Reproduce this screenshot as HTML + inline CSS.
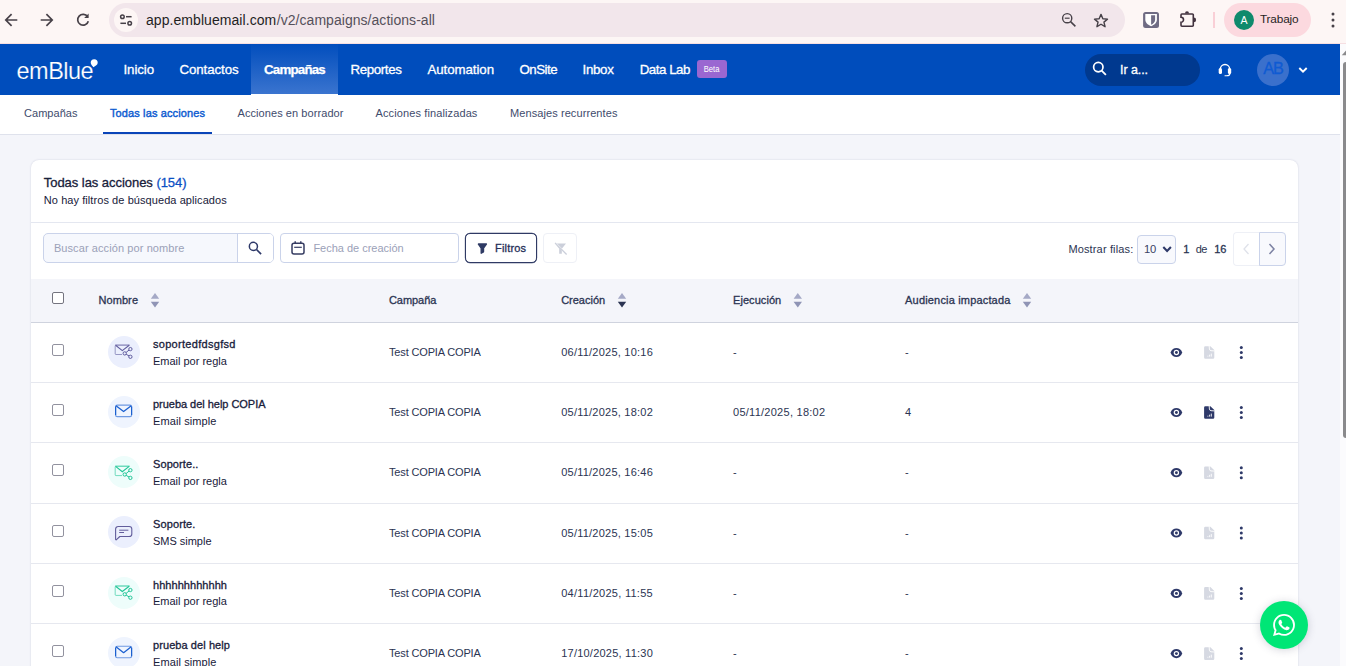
<!DOCTYPE html>
<html lang="es">
<head>
<meta charset="utf-8">
<title>emBlue - Todas las acciones</title>
<style>
*{box-sizing:border-box;margin:0;padding:0}
html,body{width:1346px;height:666px;overflow:hidden;background:#f4f5fa;font-family:"Liberation Sans",sans-serif;color:#18203a}
.tx{position:absolute;white-space:nowrap;display:block}
.a{position:absolute}
svg{position:absolute;overflow:visible}
#chrome{position:absolute;left:0;top:0;width:1346px;height:44px;background:#fdf6f5;border-bottom:1px solid #f6dfe2}
#omni{position:absolute;left:109px;top:3px;width:1016px;height:34px;border-radius:17px;background:#f2e6eb}
#site{position:absolute;left:114px;top:8px;width:24px;height:24px;border-radius:12px;background:#fdf6f5}
#profile{position:absolute;left:1224px;top:3px;width:87px;height:34px;border-radius:17px;background:#fcd9df}
#av{position:absolute;left:1234px;top:10px;width:20px;height:20px;border-radius:10px;background:#0f8a6c}
#sep{position:absolute;left:1213px;top:12px;width:2px;height:16px;background:#f9cfd6}
#nav{position:absolute;left:0;top:44px;width:1340px;height:51px;background:#004dbc}
#navact{position:absolute;left:251px;top:44px;width:87px;height:51px;background:linear-gradient(#024ebd,#3a74cf);border-bottom:1px solid #fdfeff}
#beta{position:absolute;left:697px;top:60px;width:30px;height:18px;border-radius:3px;background:#9a67d1}
#goto{position:absolute;left:1085px;top:54px;width:115px;height:32px;border-radius:16px;background:#00398f}
#ab{position:absolute;left:1257px;top:54px;width:32px;height:32px;border-radius:16px;background:#3a70cc}
#subnav{position:absolute;left:0;top:95px;width:1340px;height:40px;background:#fff;border-bottom:1px solid #dfe2ec}
#subul{position:absolute;left:103px;top:132px;width:109px;height:2px;background:#0a44b8}
#track{position:absolute;left:1340px;top:44px;width:6px;height:622px;background:#fbfbfd}
#thumb{position:absolute;left:1343px;top:62px;width:8px;height:376px;background:#8a8a8c;border-radius:3px}
#card{position:absolute;left:31px;top:160px;width:1267px;height:540px;background:#fff;border-radius:8px;box-shadow:0 0 2px rgba(50,60,110,.20)}
#hline{position:absolute;left:31px;top:222px;width:1267px;height:1px;background:#e4e7f0}
#sbox{position:absolute;left:43px;top:233px;width:231px;height:30px;border:1px solid #cad3ea;border-radius:5px;background:#f6f8fd}
#sbtn{position:absolute;left:237px;top:234px;width:36px;height:28px;border-left:1px solid #cad3ea;background:#fff;border-radius:0 4px 4px 0}
#dbox{position:absolute;left:280px;top:233px;width:179px;height:30px;border:1px solid #cad3ea;border-radius:4px;background:#fff}
#fbtn{position:absolute;left:465px;top:233px;width:72px;height:30px;border:1px solid #2f3a64;border-radius:5px;box-shadow:0 0 0 .15px #2f3a64;background:#fff}
#cbtn{position:absolute;left:543px;top:233px;width:34px;height:30px;border:1px solid #eef0f6;border-radius:4px;background:#fff}
#sel{position:absolute;left:1137px;top:235px;width:39px;height:29px;border:1px solid #cad3ea;border-radius:4px;background:#f8f9fd}
#prev{position:absolute;left:1233px;top:232px;width:27px;height:34px;border:1px solid #eef0f6;border-right:none;border-radius:4px 0 0 4px;background:#fff}
#next{position:absolute;left:1259px;top:232px;width:27px;height:34px;border:1px solid #cad3ea;border-radius:0 4px 4px 0;background:#f8f9fd}
#thead{position:absolute;left:31px;top:279px;width:1267px;height:44px;background:#f4f5fa;border-bottom:1px solid #cfd3de}
.rl{position:absolute;left:31px;width:1267px;height:1px;background:#e6e8ef}
.cb{position:absolute;left:52px;width:12px;height:12px;border:1px solid #92929f;border-radius:2px;background:#fff}
.ic{position:absolute;left:108px;width:32px;height:32px;border-radius:16px}
#wa{position:absolute;left:1260px;top:601px;width:48px;height:48px;border-radius:24px;background:#00e676;box-shadow:0 1px 8px rgba(60,60,90,.22)}
</style>
</head>
<body>
<div id="chrome"></div>
<div id="omni"></div><div id="site"></div>
<div id="sep"></div><div id="profile"></div><div id="av"></div>

<svg style="left:0;top:0" width="1346" height="44" viewBox="0 0 1346 44" fill="none" stroke="#474148" stroke-width="1.7" stroke-linecap="butt" stroke-linejoin="miter">
<path d="M17.3 20H6.2M11.6 14.2L5.8 20l5.8 5.8"/>
<path d="M40.7 20h11.1M46.4 14.2l5.8 5.8-5.8 5.8"/>
<path d="M87.6 16.8A5.4 5.4 0 1 0 88.3 21.2"/>
<path d="M88.6 13.6v4.4h-4.4z" fill="#474148" stroke="none"/>
<circle cx="122.4" cy="16.7" r="1.8" stroke-width="1.5"/><path d="M126 16.7h5.6" stroke-width="1.5"/>
<circle cx="129.7" cy="23.3" r="1.8" stroke-width="1.5"/><path d="M120.4 23.3h5.6" stroke-width="1.5"/>
<circle cx="1067.2" cy="18.2" r="4.6" stroke-width="1.4"/><path d="M1070.6 21.6l4.8 4.8" stroke-width="1.5"/><path d="M1064.8 18.2h4.8" stroke-width="1.2"/>
<path d="M1101 14.4l1.85 4.3 4.65.4-3.55 3.05 1.1 4.55-4.05-2.45-4.05 2.45 1.1-4.55-3.55-3.05 4.65-.4z" stroke-width="1.4" stroke-linejoin="round"/>
<rect x="1143.100" y="12" width="15.900" height="16" rx="2.500" fill="#6f6b83" stroke="none"/>
<path d="M1145.300 14h11.600v5.800c0 3-2.800 5.200-5.800 6.500-3-1.300-5.800-3.500-5.800-6.500z" fill="#fff" stroke="none"/>
<path d="M1151.100 15.300v9.500c2-1 4-2.600 4-5v-4.500z" fill="#6f6b83" stroke="none"/>
<path d="M1181.900 14h10.500a.9.900 0 0 1 .9.900v10.400a.9.900 0 0 1-.9.900h-10.500a.9.900 0 0 1-.9-.9v-3.100a2.500 2.500 0 0 0 0-5v-2.300a.9.900 0 0 1 .9-.9z" stroke-width="1.600" stroke="#42323f"/>
<path d="M1185 13.500a2 2.300 0 0 1 4 0z" fill="#42323f" stroke="none"/><path d="M1193.700 17.500a2.400 2.400 0 0 1 0 4.800z" fill="#42323f" stroke="none"/>
<circle cx="1333" cy="14" r="1.5" fill="#474148" stroke="none"/><circle cx="1333" cy="20" r="1.5" fill="#474148" stroke="none"/><circle cx="1333" cy="26" r="1.5" fill="#474148" stroke="none"/>
</svg>
<div id="nav"></div><div id="navact"></div><div id="beta"></div><div id="goto"></div><div id="ab"></div>
<div id="subnav"></div><div id="subul"></div>
<div id="track"></div><div id="thumb"></div>
<svg style="left:0;top:44px" width="1340" height="51" viewBox="0 44 1340 51" fill="none" stroke="#fff">
<path d="M94.200 59.300a3.500 3.500 0 0 1 3.500 3.500c0 2-2.200 3.500-4.400 4.400-.6-1.200-2.600-2.700-2.600-4.400a3.500 3.500 0 0 1 3.500-3.500z" fill="#fff" stroke="none"/>
<circle cx="1098.300" cy="67.100" r="4.700" stroke-width="1.700"/><path d="M1101.600 70.600l4.300 4.300" stroke-width="1.800"/>
<path d="M1220.300 71v-1.600a4.700 4.900 0 0 1 9.400 0v1.600" stroke-width="1.400"/>
<rect x="1218.700" y="68" width="3.300" height="6" rx="1.500" fill="#fff" stroke="none"/><rect x="1227.900" y="68" width="3.300" height="6" rx="1.500" fill="#fff" stroke="none"/>
<path d="M1229.900 73.500c0 1.700-1.500 2.300-3.200 2.300h-1.700" stroke-width="1.100" stroke-linecap="round"/>
<path d="M1299.300 68l3.700 3.700 3.700-3.700" stroke-width="1.900"/>
<path d="M1341.800 55.300l4.200-4.900v4.900z" fill="#8a8a8c" stroke="none"/>
</svg>
<div id="card"></div><div id="hline"></div>
<div id="sbox"></div><div id="sbtn"></div><div id="dbox"></div><div id="fbtn"></div><div id="cbtn"></div>
<div id="sel"></div><div id="prev"></div><div id="next"></div>
<div id="thead"></div>
<svg style="left:0;top:220px" width="1340" height="100" viewBox="0 220 1340 100" fill="none" stroke="#2e3969">
<circle cx="253.400" cy="246.400" r="4.050" stroke-width="1.500"/><path d="M256.500 249.500l4.600 4.600" stroke-width="1.700"/>
<rect x="292" y="243.300" width="12" height="10.800" rx="2" stroke-width="1.500" stroke="#363c62"/><path d="M294.200 247.300h7.600" stroke-width="1.200" stroke="#363c62"/><path d="M295.200 241.300v2.400M300.800 241.300v2.400" stroke-width="1.400" stroke="#363c62"/>
<path d="M478.400 244h8l-2.900 4.200v3.600l-2.300 1.400v-5z" fill="#2f3a64" stroke="#2f3a64" stroke-width="1.400" stroke-linejoin="round"/>
<g stroke="none" fill="#cbcfda"><path d="M555 243.500h11l-4.200 5.300v5h-2.600v-5z"/><path d="M554 242.600l1-1 12.500 12.500-1 1z" fill="#fff"/><path d="M554.600 243.300l.9-.9 11.600 11.600-.9.900z"/></g>
<path d="M1163.300 247.100l3.800 3.800 3.800-3.800" stroke-width="2.100"/>
<path d="M1248.500 244l-4.500 5 4.500 5" stroke="#dfe2ea" stroke-width="1.300"/>
<path d="M1269.500 244l4.500 5-4.500 5" stroke="#7c82a3" stroke-width="1.500"/>
<g stroke="none"><path d="M150.8 298.800l4.200-5.800 4.200 5.800z" fill="#a5a9c6"/><path d="M150.8 301.800h8.400l-4.200 5.600z" fill="#8f94b5"/><path d="M617.8 298.800l4.200-5.800 4.200 5.800z" fill="#a5a9c6"/><path d="M617.8 301.800h8.400l-4.200 5.600z" fill="#2b3452"/><path d="M793.6 298.800l4.200-5.800 4.200 5.800z" fill="#a5a9c6"/><path d="M793.6 301.800h8.400l-4.200 5.600z" fill="#8f94b5"/><path d="M1022.8 298.800l4.200-5.800 4.200 5.800z" fill="#a5a9c6"/><path d="M1022.8 301.800h8.400l-4.200 5.600z" fill="#8f94b5"/></g>
</svg>
<div class="cb" style="top:292px;border-color:#74747f"></div>
<div class="rl" style="top:382px"></div>
<div class="rl" style="top:442px"></div>
<div class="rl" style="top:503px"></div>
<div class="rl" style="top:563px"></div>
<div class="rl" style="top:623px"></div>
<div class="cb" style="top:344.0px"></div>
<div class="ic" style="top:335.8px;background:#ebeffd"></div>
<div class="cb" style="top:404.0px"></div>
<div class="ic" style="top:395.8px;background:#eff4fe"></div>
<div class="cb" style="top:464.2px"></div>
<div class="ic" style="top:456.0px;background:#eefdfb"></div>
<div class="cb" style="top:524.5px"></div>
<div class="ic" style="top:516.3px;background:#ebeffd"></div>
<div class="cb" style="top:584.9px"></div>
<div class="ic" style="top:576.7px;background:#eefdfb"></div>
<div class="cb" style="top:645.1px"></div>
<div class="ic" style="top:636.9px;background:#eff4fe"></div>
<svg style="left:0;top:323px" width="1340" height="343" viewBox="0 323 1340 343">
<g fill="none" stroke="#5f5b9e" stroke-width="1">
<path d="M122.0 354.5H116.0a.8.8 0 0 1-.8-.8V345.7" opacity=".6"/>
<path d="M115.2 345.1H129.6" stroke-width="1.150" opacity=".8"/>
<path d="M115.6 345.3L122.3 350.6L129.2 345.3" stroke-width="1.100"/>
<circle cx="130.4" cy="349.1" r="1.650"/><circle cx="124.7" cy="353.4" r="1.650"/><circle cx="130.4" cy="356.8" r="1.650"/>
<path d="M129.0 350.1L126.1 352.4M126.2 354.3L129.0 355.9"/></g>
<path d="M1170.5 352.5C1171.7 349.3 1173.9 347.9 1176.4 347.9C1178.9 347.9 1181.1 349.3 1182.3 352.5C1181.1 355.7 1178.9 357.1 1176.4 357.1C1173.9 357.1 1171.7 355.7 1170.5 352.5z" fill="#2e3969"/><circle cx="1176.4" cy="352.5" r="2.700" fill="#fff"/><circle cx="1176.4" cy="352.5" r="1.450" fill="#2e3969"/>
<path d="M1205.300 346.2h5.100l3.900 3.900v7.500a1.200 1.200 0 0 1-1.200 1.200h-7.800a1.200 1.200 0 0 1-1.200-1.200v-10.200a1.200 1.200 0 0 1 1.200-1.200z" fill="#d6d9e2"/><path d="M1209.200 345.9l.2 3.200q.2 1.400 1.600 1.600l3.600.2" stroke="#fff" stroke-width=".9" fill="none"/><path d="M1211.300 353.6v3M1209.600 354.7v1.900M1207.900 355.7v.9" stroke="#fff" stroke-width=".9"/>
<circle cx="1241.300" cy="347.5" r="1.500" fill="#2e3969"/>
<circle cx="1241.300" cy="352.5" r="1.500" fill="#2e3969"/>
<circle cx="1241.300" cy="357.5" r="1.500" fill="#2e3969"/>
<g fill="none" stroke="#1a5fd0" stroke-width="1.150" stroke-linejoin="round">
<rect x="115.6" y="405.1" width="16" height="11.500" rx="1.600" opacity=".6"/>
<path d="M115.6 406.6v8.500M131.6 406.6v8.500"/>
<path d="M116.0 405.7l7.600 5.900 7.600-5.900" stroke-width="1.250"/></g>
<path d="M1170.5 412.5C1171.7 409.3 1173.9 407.9 1176.4 407.9C1178.9 407.9 1181.1 409.3 1182.3 412.5C1181.1 415.7 1178.9 417.1 1176.4 417.1C1173.9 417.1 1171.7 415.7 1170.5 412.5z" fill="#2e3969"/><circle cx="1176.4" cy="412.5" r="2.700" fill="#fff"/><circle cx="1176.4" cy="412.5" r="1.450" fill="#2e3969"/>
<path d="M1205.300 406.2h5.100l3.900 3.900v7.500a1.200 1.200 0 0 1-1.200 1.200h-7.800a1.200 1.200 0 0 1-1.200-1.200v-10.200a1.200 1.200 0 0 1 1.200-1.200z" fill="#2e3969"/><path d="M1209.200 405.9l.2 3.200q.2 1.400 1.600 1.600l3.600.2" stroke="#fff" stroke-width=".9" fill="none"/><path d="M1211.300 413.6v3M1209.600 414.7v1.900M1207.900 415.7v.9" stroke="#fff" stroke-width=".9"/>
<circle cx="1241.300" cy="407.5" r="1.500" fill="#2e3969"/>
<circle cx="1241.300" cy="412.5" r="1.500" fill="#2e3969"/>
<circle cx="1241.300" cy="417.5" r="1.500" fill="#2e3969"/>
<g fill="none" stroke="#1fc596" stroke-width="1">
<path d="M122.0 475.6H116.0a.8.8 0 0 1-.8-.8V466.8" opacity=".6"/>
<path d="M115.2 466.2H129.6" stroke-width="1.150" opacity=".8"/>
<path d="M115.6 466.4L122.3 471.7L129.2 466.4" stroke-width="1.100"/>
<circle cx="130.4" cy="470.2" r="1.650"/><circle cx="124.7" cy="474.5" r="1.650"/><circle cx="130.4" cy="477.9" r="1.650"/>
<path d="M129.0 471.2L126.1 473.5M126.2 475.4L129.0 477.0"/></g>
<path d="M1170.5 472.7C1171.7 469.5 1173.9 468.1 1176.4 468.1C1178.9 468.1 1181.1 469.5 1182.3 472.7C1181.1 475.9 1178.9 477.3 1176.4 477.3C1173.9 477.3 1171.7 475.9 1170.5 472.7z" fill="#2e3969"/><circle cx="1176.4" cy="472.7" r="2.700" fill="#fff"/><circle cx="1176.4" cy="472.7" r="1.450" fill="#2e3969"/>
<path d="M1205.300 466.4h5.100l3.900 3.900v7.500a1.200 1.200 0 0 1-1.200 1.200h-7.800a1.200 1.200 0 0 1-1.200-1.200v-10.200a1.200 1.200 0 0 1 1.200-1.200z" fill="#d6d9e2"/><path d="M1209.200 466.1l.2 3.200q.2 1.400 1.600 1.600l3.600.2" stroke="#fff" stroke-width=".9" fill="none"/><path d="M1211.300 473.8v3M1209.600 474.9v1.900M1207.900 475.9v.9" stroke="#fff" stroke-width=".9"/>
<circle cx="1241.300" cy="467.7" r="1.500" fill="#2e3969"/>
<circle cx="1241.300" cy="472.7" r="1.500" fill="#2e3969"/>
<circle cx="1241.300" cy="477.7" r="1.500" fill="#2e3969"/>
<g fill="none" stroke="#625d9c" stroke-width="1.100" stroke-linejoin="round">
<path d="M118.2 526.5h11a2.600 2.600 0 0 1 2.600 2.600v4.800a2.600 2.600 0 0 1-2.600 2.600h-9.400l-3.300 3.100a.5.500 0 0 1-.9-.4v-10.100a2.600 2.600 0 0 1 2.600-2.600z"/>
<path d="M119.2 530.2h9.200M119.2 532.5h4.800" stroke-width="1"/></g>
<path d="M1170.5 533C1171.7 529.8 1173.9 528.4 1176.4 528.4C1178.9 528.4 1181.1 529.8 1182.3 533C1181.1 536.2 1178.9 537.6 1176.4 537.6C1173.9 537.6 1171.7 536.2 1170.5 533z" fill="#2e3969"/><circle cx="1176.4" cy="533" r="2.700" fill="#fff"/><circle cx="1176.4" cy="533" r="1.450" fill="#2e3969"/>
<path d="M1205.300 526.7h5.100l3.900 3.900v7.500a1.200 1.200 0 0 1-1.200 1.200h-7.800a1.200 1.200 0 0 1-1.200-1.200v-10.200a1.200 1.200 0 0 1 1.200-1.200z" fill="#d6d9e2"/><path d="M1209.200 526.4l.2 3.200q.2 1.400 1.600 1.600l3.600.2" stroke="#fff" stroke-width=".9" fill="none"/><path d="M1211.300 534.1v3M1209.600 535.2v1.900M1207.900 536.2v.9" stroke="#fff" stroke-width=".9"/>
<circle cx="1241.300" cy="528" r="1.500" fill="#2e3969"/>
<circle cx="1241.300" cy="533" r="1.500" fill="#2e3969"/>
<circle cx="1241.300" cy="538" r="1.500" fill="#2e3969"/>
<g fill="none" stroke="#1fc596" stroke-width="1">
<path d="M122.0 595.4H116.0a.8.8 0 0 1-.8-.8V586.6" opacity=".6"/>
<path d="M115.2 586.0H129.6" stroke-width="1.150" opacity=".8"/>
<path d="M115.6 586.2L122.3 591.5L129.2 586.2" stroke-width="1.100"/>
<circle cx="130.4" cy="590.0" r="1.650"/><circle cx="124.7" cy="594.3" r="1.650"/><circle cx="130.4" cy="597.7" r="1.650"/>
<path d="M129.0 591.0L126.1 593.3M126.2 595.2L129.0 596.8"/></g>
<path d="M1170.5 593.4C1171.7 590.2 1173.9 588.8 1176.4 588.8C1178.9 588.8 1181.1 590.2 1182.3 593.4C1181.1 596.6 1178.9 598.0 1176.4 598.0C1173.9 598.0 1171.7 596.6 1170.5 593.4z" fill="#2e3969"/><circle cx="1176.4" cy="593.4" r="2.700" fill="#fff"/><circle cx="1176.4" cy="593.4" r="1.450" fill="#2e3969"/>
<path d="M1205.300 587.1h5.100l3.900 3.900v7.500a1.200 1.200 0 0 1-1.200 1.200h-7.800a1.200 1.200 0 0 1-1.200-1.200v-10.200a1.200 1.200 0 0 1 1.200-1.200z" fill="#d6d9e2"/><path d="M1209.200 586.8l.2 3.200q.2 1.400 1.600 1.600l3.600.2" stroke="#fff" stroke-width=".9" fill="none"/><path d="M1211.300 594.5v3M1209.600 595.6v1.900M1207.900 596.6v.9" stroke="#fff" stroke-width=".9"/>
<circle cx="1241.300" cy="588.4" r="1.500" fill="#2e3969"/>
<circle cx="1241.300" cy="593.4" r="1.500" fill="#2e3969"/>
<circle cx="1241.300" cy="598.4" r="1.500" fill="#2e3969"/>
<g fill="none" stroke="#1a5fd0" stroke-width="1.150" stroke-linejoin="round">
<rect x="115.6" y="646.2" width="16" height="11.500" rx="1.600" opacity=".6"/>
<path d="M115.6 647.7v8.500M131.6 647.7v8.500"/>
<path d="M116.0 646.8l7.600 5.900 7.600-5.900" stroke-width="1.250"/></g>
<path d="M1170.5 653.6C1171.7 650.4 1173.9 649.0 1176.4 649.0C1178.9 649.0 1181.1 650.4 1182.3 653.6C1181.1 656.8 1178.9 658.2 1176.4 658.2C1173.9 658.2 1171.7 656.8 1170.5 653.6z" fill="#2e3969"/><circle cx="1176.4" cy="653.6" r="2.700" fill="#fff"/><circle cx="1176.4" cy="653.6" r="1.450" fill="#2e3969"/>
<path d="M1205.300 647.3h5.100l3.900 3.900v7.500a1.200 1.200 0 0 1-1.200 1.200h-7.800a1.200 1.200 0 0 1-1.200-1.200v-10.200a1.200 1.200 0 0 1 1.200-1.200z" fill="#d6d9e2"/><path d="M1209.200 647.0l.2 3.200q.2 1.400 1.600 1.600l3.600.2" stroke="#fff" stroke-width=".9" fill="none"/><path d="M1211.300 654.7v3M1209.600 655.8v1.900M1207.900 656.8v.9" stroke="#fff" stroke-width=".9"/>
<circle cx="1241.300" cy="648.6" r="1.500" fill="#2e3969"/>
<circle cx="1241.300" cy="653.6" r="1.500" fill="#2e3969"/>
<circle cx="1241.300" cy="658.6" r="1.500" fill="#2e3969"/>
</svg>
<div id="wa"></div>
<svg style="left:1273px;top:614px" width="22" height="22" viewBox="0 0 24 24"><path fill="#fff" d="M17.472 14.382c-.297-.149-1.758-.867-2.030-.967-.273-.099-.471-.148-.670.150-.197.297-.767.966-.940 1.164-.173.199-.347.223-.644.075-.297-.150-1.255-.463-2.390-1.475-.883-.788-1.480-1.761-1.653-2.059-.173-.297-.018-.458.130-.606.134-.133.298-.347.446-.520.149-.174.198-.298.298-.497.099-.198.050-.371-.025-.520-.075-.149-.669-1.612-.916-2.207-.242-.579-.487-.500-.669-.510-.173-.008-.371-.010-.570-.010-.198 0-.520.074-.792.372-.272.297-1.040 1.016-1.040 2.479 0 1.462 1.065 2.875 1.213 3.074.149.198 2.096 3.200 5.077 4.487.709.306 1.262.489 1.694.625.712.227 1.360.195 1.871.118.571-.085 1.758-.719 2.006-1.413.248-.694.248-1.289.173-1.413-.074-.124-.272-.198-.570-.347m-5.421 7.403h-.004a9.870 9.870 0 0 1-5.031-1.378l-.361-.214-3.741.982.998-3.648-.235-.374a9.860 9.860 0 0 1-1.510-5.260c.001-5.450 4.436-9.884 9.888-9.884 2.640 0 5.122 1.030 6.988 2.898a9.825 9.825 0 0 1 2.893 6.994c-.003 5.450-4.437 9.884-9.885 9.884m8.413-18.297A11.815 11.815 0 0 0 12.050 0C5.495 0 .160 5.335.157 11.892c0 2.096.547 4.142 1.588 5.945L.057 24l6.305-1.654a11.882 11.882 0 0 0 5.683 1.448h.005c6.554 0 11.890-5.335 11.893-11.893a11.821 11.821 0 0 0-3.480-8.413z"/></svg>
<span class="tx" style="left:146.0px;top:9.6px;font-size:14px;line-height:20px;color:#1f1f1f;letter-spacing:0.063px;">app.embluemail.com</span>
<span class="tx" style="left:276.8px;top:9.6px;font-size:14px;line-height:20px;color:#55505a;letter-spacing:0.040px;">/v2/campaigns/actions-all</span>
<span class="tx" style="left:1260.0px;top:11.4px;font-size:11.8px;line-height:17px;color:#1f1f1f;letter-spacing:-0.166px;">Trabajo</span>
<span class="tx" style="left:1240.5px;top:12.5px;font-size:10.5px;line-height:15px;color:#ffffff;letter-spacing:-0.216px;">A</span>
<span class="tx" style="left:16.6px;top:55.0px;font-size:23.5px;line-height:33px;color:#ffffff;letter-spacing:-0.548px;-webkit-text-stroke:0.2px #004dbc;transform:scaleY(1.04);transform-origin:0 74.6%;">emBlue</span>
<span class="tx" style="left:123.5px;top:60.0px;font-size:13.3px;line-height:19px;color:#ffffff;-webkit-text-stroke-width:0.3px;letter-spacing:-0.091px;-webkit-text-stroke-width:0.3px;">Inicio</span>
<span class="tx" style="left:179.5px;top:60.0px;font-size:13.3px;line-height:19px;color:#ffffff;-webkit-text-stroke-width:0.3px;letter-spacing:-0.097px;-webkit-text-stroke-width:0.3px;">Contactos</span>
<span class="tx" style="left:264.0px;top:60.0px;font-size:13.3px;line-height:19px;color:#ffffff;font-weight:bold;-webkit-text-stroke-width:0.25px;letter-spacing:-0.783px;">Campañas</span>
<span class="tx" style="left:350.5px;top:60.0px;font-size:13.3px;line-height:19px;color:#ffffff;-webkit-text-stroke-width:0.3px;letter-spacing:-0.371px;-webkit-text-stroke-width:0.3px;">Reportes</span>
<span class="tx" style="left:427.5px;top:60.0px;font-size:13.3px;line-height:19px;color:#ffffff;-webkit-text-stroke-width:0.3px;letter-spacing:-0.077px;-webkit-text-stroke-width:0.3px;">Automation</span>
<span class="tx" style="left:519.5px;top:60.0px;font-size:13.3px;line-height:19px;color:#ffffff;-webkit-text-stroke-width:0.3px;letter-spacing:-0.526px;-webkit-text-stroke-width:0.3px;">OnSite</span>
<span class="tx" style="left:582.5px;top:60.0px;font-size:13.3px;line-height:19px;color:#ffffff;-webkit-text-stroke-width:0.3px;letter-spacing:-0.306px;-webkit-text-stroke-width:0.3px;">Inbox</span>
<span class="tx" style="left:639.7px;top:60.0px;font-size:13.3px;line-height:19px;color:#ffffff;-webkit-text-stroke-width:0.3px;letter-spacing:-0.459px;-webkit-text-stroke-width:0.3px;">Data Lab</span>
<span class="tx" style="left:703.8px;top:64.2px;font-size:7.6px;line-height:11px;color:#ffffff;letter-spacing:-0.006px;transform:scaleY(1.28);transform-origin:0 74%;">Beta</span>
<span class="tx" style="left:1120.0px;top:60.9px;font-size:12.5px;line-height:18px;color:#ffffff;-webkit-text-stroke-width:0.3px;letter-spacing:-0.069px;">Ir a...</span>
<span class="tx" style="left:1263.2px;top:57.1px;font-size:16.3px;line-height:23px;color:#0f5bd3;-webkit-text-stroke-width:0.3px;letter-spacing:-1.167px;">AB</span>
<span class="tx" style="left:24.0px;top:105.7px;font-size:11px;line-height:15px;color:#414b6c;letter-spacing:0.037px;">Campañas</span>
<span class="tx" style="left:110.0px;top:105.7px;font-size:11px;line-height:15px;color:#0c5ad0;-webkit-text-stroke-width:0.3px;letter-spacing:0.114px;-webkit-text-stroke-width:0.4px;">Todas las acciones</span>
<span class="tx" style="left:237.5px;top:105.7px;font-size:11px;line-height:15px;color:#414b6c;letter-spacing:0.072px;">Acciones en borrador</span>
<span class="tx" style="left:375.5px;top:105.7px;font-size:11px;line-height:15px;color:#414b6c;letter-spacing:0.116px;">Acciones finalizadas</span>
<span class="tx" style="left:510.0px;top:105.7px;font-size:11px;line-height:15px;color:#414b6c;letter-spacing:0.086px;">Mensajes recurrentes</span>
<span class="tx" style="left:43.8px;top:173.7px;font-size:13px;line-height:18px;color:#18203a;-webkit-text-stroke-width:0.3px;letter-spacing:-0.046px;">Todas las acciones <span style="color:#0b4fc4">(154)</span></span>
<span class="tx" style="left:43.8px;top:192.9px;font-size:11px;line-height:15px;color:#18203a;letter-spacing:0.072px;">No hay filtros de búsqueda aplicados</span>
<span class="tx" style="left:53.9px;top:240.7px;font-size:11px;line-height:15px;color:#9ba1b8;letter-spacing:0.091px;">Buscar acción por nombre</span>
<span class="tx" style="left:313.4px;top:240.7px;font-size:11px;line-height:15px;color:#9ba1b8;letter-spacing:-0.018px;">Fecha de creación</span>
<span class="tx" style="left:495.0px;top:240.7px;font-size:11px;line-height:15px;color:#262f58;-webkit-text-stroke-width:0.3px;letter-spacing:0.178px;">Filtros</span>
<span class="tx" style="left:1068.4px;top:241.9px;font-size:11px;line-height:15px;color:#2b3452;letter-spacing:0.145px;">Mostrar filas:</span>
<span class="tx" style="left:1143.9px;top:241.0px;font-size:11.2px;line-height:16px;color:#3a4265;letter-spacing:-0.027px;">10</span>
<span class="tx" style="left:1183.3px;top:241.9px;font-size:11px;line-height:15px;color:#2b3452;-webkit-text-stroke-width:0.3px;letter-spacing:-1.725px;">1</span>
<span class="tx" style="left:1195.8px;top:241.9px;font-size:11px;line-height:15px;color:#2b3452;letter-spacing:-0.775px;">de</span>
<span class="tx" style="left:1214.2px;top:241.9px;font-size:11px;line-height:15px;color:#2b3452;-webkit-text-stroke-width:0.3px;letter-spacing:-0.125px;">16</span>
<span class="tx" style="left:98.4px;top:292.9px;font-size:11px;line-height:15px;color:#2b3452;-webkit-text-stroke-width:0.3px;letter-spacing:0.096px;">Nombre</span>
<span class="tx" style="left:388.9px;top:292.9px;font-size:11px;line-height:15px;color:#2b3452;-webkit-text-stroke-width:0.3px;letter-spacing:-0.029px;">Campaña</span>
<span class="tx" style="left:561.2px;top:292.9px;font-size:11px;line-height:15px;color:#2b3452;-webkit-text-stroke-width:0.3px;letter-spacing:-0.016px;">Creación</span>
<span class="tx" style="left:733.0px;top:292.9px;font-size:11px;line-height:15px;color:#2b3452;-webkit-text-stroke-width:0.3px;letter-spacing:0.066px;">Ejecución</span>
<span class="tx" style="left:905.1px;top:292.9px;font-size:11px;line-height:15px;color:#2b3452;-webkit-text-stroke-width:0.3px;letter-spacing:0.172px;">Audiencia impactada</span>
<span class="tx" style="left:153.0px;top:336.6px;font-size:11px;line-height:15px;color:#18203a;-webkit-text-stroke-width:0.3px;letter-spacing:0.295px;">soportedfdsgfsd</span>
<span class="tx" style="left:153.0px;top:353.5px;font-size:11px;line-height:15px;color:#18203a;letter-spacing:-0.012px;">Email por regla</span>
<span class="tx" style="left:389.0px;top:345.0px;font-size:11px;line-height:15px;color:#2b3452;letter-spacing:-0.153px;">Test COPIA COPIA</span>
<span class="tx" style="left:561.2px;top:345.0px;font-size:11px;line-height:15px;color:#2b3452;letter-spacing:0.230px;">06/11/2025, 10:16</span>
<span class="tx" style="left:733.0px;top:345.0px;font-size:11px;line-height:15px;color:#2b3452;letter-spacing:-0.472px;">-</span>
<span class="tx" style="left:905.0px;top:345.0px;font-size:11px;line-height:15px;color:#2b3452;letter-spacing:-0.472px;">-</span>
<span class="tx" style="left:153.0px;top:396.6px;font-size:11px;line-height:15px;color:#18203a;-webkit-text-stroke-width:0.3px;letter-spacing:-0.031px;">prueba del help COPIA</span>
<span class="tx" style="left:153.0px;top:413.5px;font-size:11px;line-height:15px;color:#18203a;letter-spacing:0.095px;">Email simple</span>
<span class="tx" style="left:389.0px;top:405.0px;font-size:11px;line-height:15px;color:#2b3452;letter-spacing:-0.153px;">Test COPIA COPIA</span>
<span class="tx" style="left:561.2px;top:405.0px;font-size:11px;line-height:15px;color:#2b3452;letter-spacing:0.230px;">05/11/2025, 18:02</span>
<span class="tx" style="left:733.0px;top:405.0px;font-size:11px;line-height:15px;color:#2b3452;letter-spacing:0.265px;">05/11/2025, 18:02</span>
<span class="tx" style="left:905.0px;top:405.0px;font-size:11px;line-height:15px;color:#2b3452;letter-spacing:-0.125px;">4</span>
<span class="tx" style="left:153.0px;top:456.8px;font-size:11px;line-height:15px;color:#18203a;-webkit-text-stroke-width:0.3px;letter-spacing:0.095px;">Soporte..</span>
<span class="tx" style="left:153.0px;top:473.7px;font-size:11px;line-height:15px;color:#18203a;letter-spacing:-0.012px;">Email por regla</span>
<span class="tx" style="left:389.0px;top:465.2px;font-size:11px;line-height:15px;color:#2b3452;letter-spacing:-0.153px;">Test COPIA COPIA</span>
<span class="tx" style="left:561.2px;top:465.2px;font-size:11px;line-height:15px;color:#2b3452;letter-spacing:0.230px;">05/11/2025, 16:46</span>
<span class="tx" style="left:733.0px;top:465.2px;font-size:11px;line-height:15px;color:#2b3452;letter-spacing:-0.472px;">-</span>
<span class="tx" style="left:905.0px;top:465.2px;font-size:11px;line-height:15px;color:#2b3452;letter-spacing:-0.472px;">-</span>
<span class="tx" style="left:153.0px;top:517.1px;font-size:11px;line-height:15px;color:#18203a;-webkit-text-stroke-width:0.3px;letter-spacing:0.113px;">Soporte.</span>
<span class="tx" style="left:153.0px;top:534.0px;font-size:11px;line-height:15px;color:#18203a;letter-spacing:-0.019px;">SMS simple</span>
<span class="tx" style="left:389.0px;top:525.5px;font-size:11px;line-height:15px;color:#2b3452;letter-spacing:-0.153px;">Test COPIA COPIA</span>
<span class="tx" style="left:561.2px;top:525.5px;font-size:11px;line-height:15px;color:#2b3452;letter-spacing:0.230px;">05/11/2025, 15:05</span>
<span class="tx" style="left:733.0px;top:525.5px;font-size:11px;line-height:15px;color:#2b3452;letter-spacing:-0.472px;">-</span>
<span class="tx" style="left:905.0px;top:525.5px;font-size:11px;line-height:15px;color:#2b3452;letter-spacing:-0.472px;">-</span>
<span class="tx" style="left:153.0px;top:577.5px;font-size:11px;line-height:15px;color:#18203a;-webkit-text-stroke-width:0.3px;letter-spacing:0.048px;">hhhhhhhhhhhh</span>
<span class="tx" style="left:153.0px;top:594.4px;font-size:11px;line-height:15px;color:#18203a;letter-spacing:-0.012px;">Email por regla</span>
<span class="tx" style="left:389.0px;top:585.9px;font-size:11px;line-height:15px;color:#2b3452;letter-spacing:-0.153px;">Test COPIA COPIA</span>
<span class="tx" style="left:561.2px;top:585.9px;font-size:11px;line-height:15px;color:#2b3452;letter-spacing:0.279px;">04/11/2025, 11:55</span>
<span class="tx" style="left:733.0px;top:585.9px;font-size:11px;line-height:15px;color:#2b3452;letter-spacing:-0.472px;">-</span>
<span class="tx" style="left:905.0px;top:585.9px;font-size:11px;line-height:15px;color:#2b3452;letter-spacing:-0.472px;">-</span>
<span class="tx" style="left:153.0px;top:637.7px;font-size:11px;line-height:15px;color:#18203a;-webkit-text-stroke-width:0.3px;letter-spacing:0.077px;">prueba del help</span>
<span class="tx" style="left:153.0px;top:654.6px;font-size:11px;line-height:15px;color:#18203a;letter-spacing:0.095px;">Email simple</span>
<span class="tx" style="left:389.0px;top:646.1px;font-size:11px;line-height:15px;color:#2b3452;letter-spacing:-0.153px;">Test COPIA COPIA</span>
<span class="tx" style="left:561.2px;top:646.1px;font-size:11px;line-height:15px;color:#2b3452;letter-spacing:0.230px;">17/10/2025, 11:30</span>
<span class="tx" style="left:733.0px;top:646.1px;font-size:11px;line-height:15px;color:#2b3452;letter-spacing:-0.472px;">-</span>
<span class="tx" style="left:905.0px;top:646.1px;font-size:11px;line-height:15px;color:#2b3452;letter-spacing:-0.472px;">-</span>
</body>
</html>
